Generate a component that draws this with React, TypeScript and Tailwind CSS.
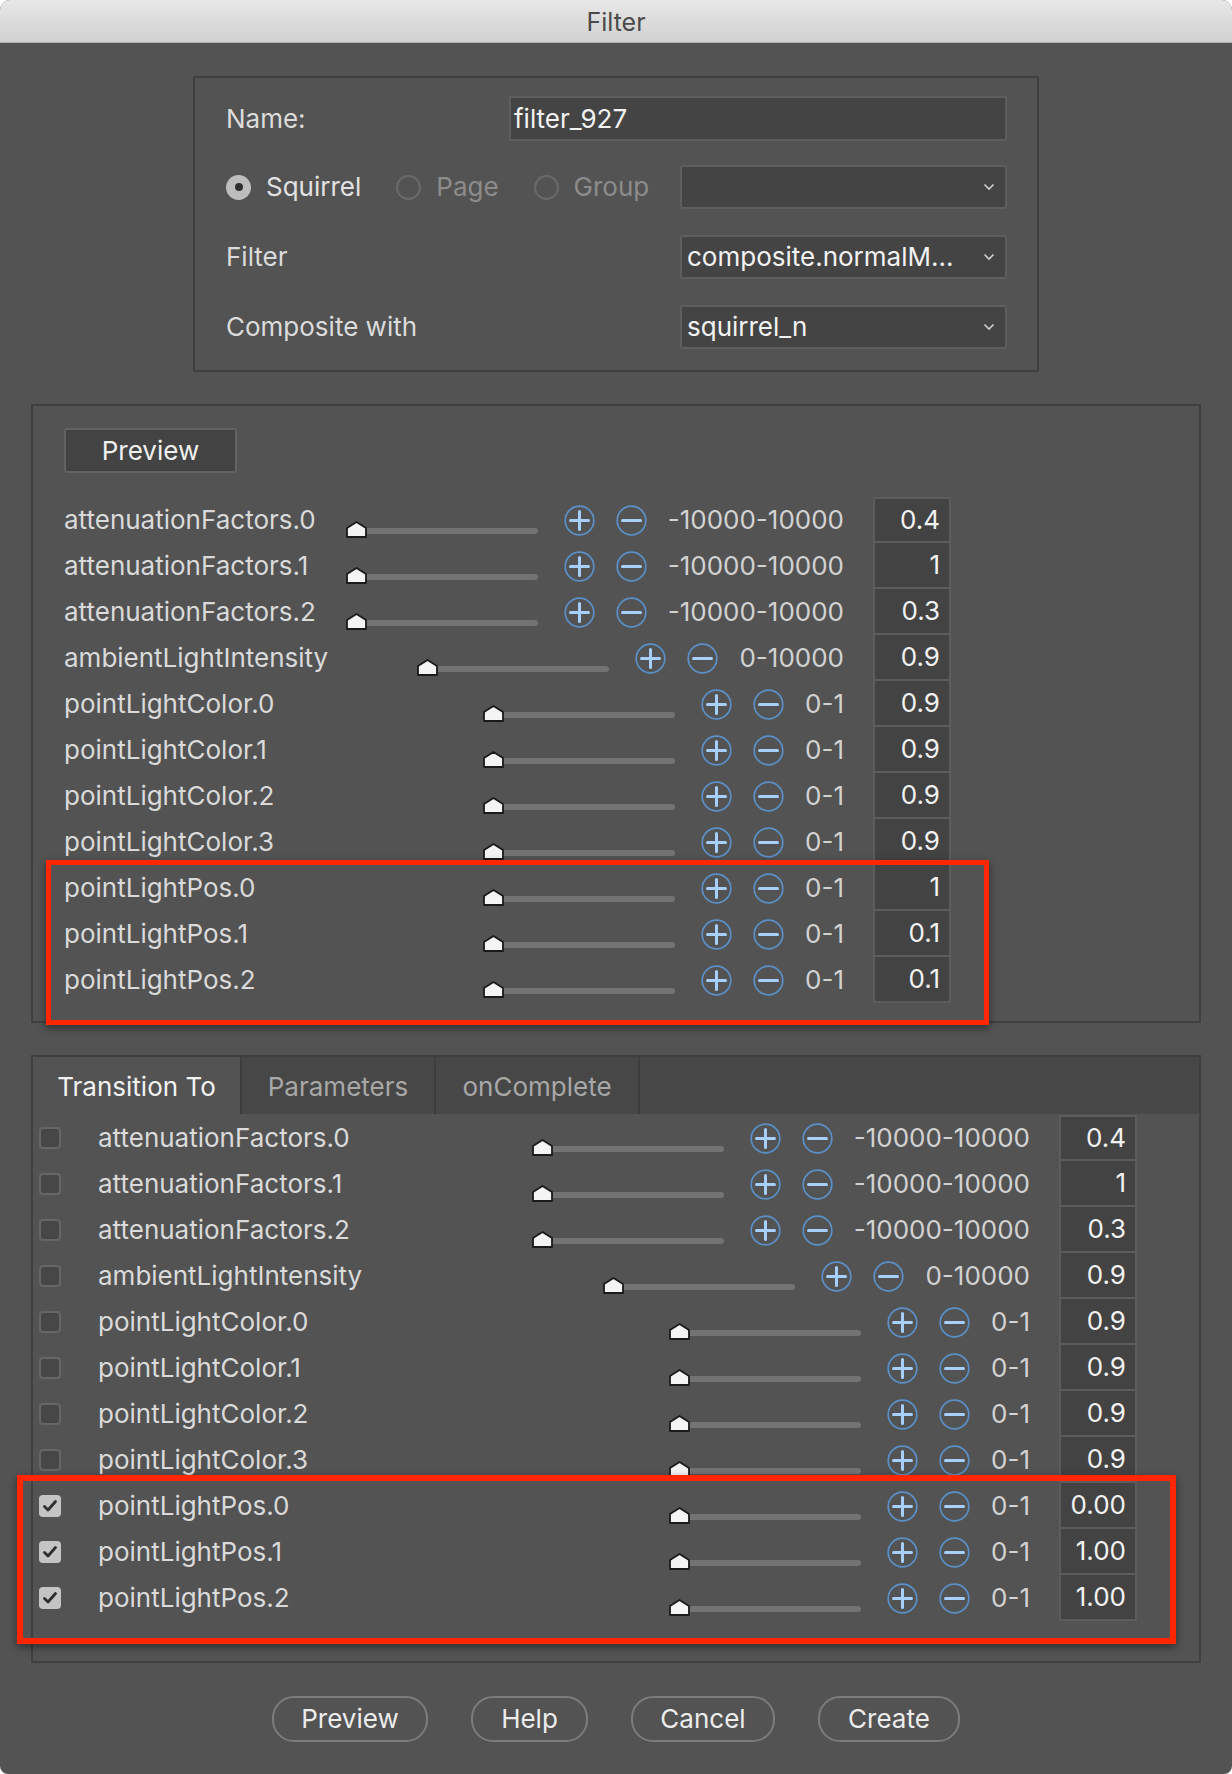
import React from "react";

type Row = { name: string; range: string; value: string; checked?: boolean };

const upperRows: Row[] = [
  { name: "attenuationFactors.0", range: "-10000-10000", value: "0.4" },
  { name: "attenuationFactors.1", range: "-10000-10000", value: "1" },
  { name: "attenuationFactors.2", range: "-10000-10000", value: "0.3" },
  { name: "ambientLightIntensity", range: "0-10000", value: "0.9" },
  { name: "pointLightColor.0", range: "0-1", value: "0.9" },
  { name: "pointLightColor.1", range: "0-1", value: "0.9" },
  { name: "pointLightColor.2", range: "0-1", value: "0.9" },
  { name: "pointLightColor.3", range: "0-1", value: "0.9" },
  { name: "pointLightPos.0", range: "0-1", value: "1" },
  { name: "pointLightPos.1", range: "0-1", value: "0.1" },
  { name: "pointLightPos.2", range: "0-1", value: "0.1" },
];

const lowerRows: Row[] = [
  ...upperRows.slice(0, 8),
  { name: "pointLightPos.0", range: "0-1", value: "0.00", checked: true },
  { name: "pointLightPos.1", range: "0-1", value: "1.00", checked: true },
  { name: "pointLightPos.2", range: "0-1", value: "1.00", checked: true },
];

function StepIcon({ minus }: { minus?: boolean }) {
  return (
    <svg width="31" height="31" viewBox="0 0 31 31" className="shrink-0">
      <circle cx="15.5" cy="15.5" r="14.3" fill="none" stroke="#5b8fc6" strokeWidth="1.7" />
      <path
        d={minus ? "M6.5 15.5H24.5" : "M6.5 15.5H24.5M15.5 6.5V24.5"}
        stroke="#a6d0fb"
        strokeWidth="3"
        strokeLinecap="round"
      />
    </svg>
  );
}

function Slider() {
  return (
    <div className="relative w-[192px] h-[17px] self-start mt-[24px] shrink-0">
      <div className="absolute left-[8px] right-0 top-[7px] h-[6px] rounded-full bg-[#737373]" />
      <svg width="21" height="17" viewBox="0 0 21 17" className="absolute left-0 top-0">
        <path
          d="M1 16V7L10.5 1L20 7V16Z"
          fill="#f4f4f4"
          stroke="#1a1a1a"
          strokeWidth="1.8"
          strokeLinejoin="round"
        />
      </svg>
    </div>
  );
}

function ValueBox({ value, first }: { value: string; first: boolean }) {
  return (
    <div
      className={
        "w-[78px] h-[46px] shrink-0 bg-[#434343] border-x-2 border-b-2 border-[#5c5c5c] flex items-center justify-end pr-[9px] text-[#f2f2f2] " +
        (first ? "border-t-2" : "")
      }
    >
      {value}
    </div>
  );
}

function ParamRow({ row, first, check }: { row: Row; first: boolean; check?: boolean }) {
  return (
    <div className="flex items-center h-[46px]">
      {check && (
        <div
          className={
            "w-[22px] h-[22px] rounded-[4px] mr-[37px] shrink-0 flex items-center justify-center " +
            (row.checked ? "bg-[#c4c4c4]" : "bg-[#474747] border-2 border-[#666666]")
          }
        >
          {row.checked && (
            <svg width="16" height="14" viewBox="0 0 16 14">
              <path d="M2.5 7.5L6 11L13.5 2.5" fill="none" stroke="#2e2e2e" strokeWidth="2.8" strokeLinecap="round" strokeLinejoin="round" />
            </svg>
          )}
        </div>
      )}
      <div className="flex-1 text-[#dadada] whitespace-nowrap">{row.name}</div>
      <Slider />
      <div className="ml-[26px] flex items-center gap-[21px]">
        <StepIcon />
        <StepIcon minus />
      </div>
      <div className="ml-[21px] mr-[29px] text-[#d2d2d2] whitespace-nowrap">{row.range}</div>
      <ValueBox value={row.value} first={first} />
    </div>
  );
}

function Radio({ label, on }: { label: string; on?: boolean }) {
  return (
    <div className="flex items-center">
      {on ? (
        <div className="w-[25px] h-[25px] rounded-full bg-[#bdbdbd] flex items-center justify-center">
          <div className="w-[8px] h-[8px] rounded-full bg-[#2f2f2f]" />
        </div>
      ) : (
        <div className="w-[25px] h-[25px] rounded-full border-2 border-[#6a6a6a]" />
      )}
      <span className={"ml-[15px] " + (on ? "text-[#e2e2e2]" : "text-[#8c8c8c]")}>{label}</span>
    </div>
  );
}

function Dropdown({ text }: { text: string }) {
  return (
    <div className="w-[327px] h-[44px] bg-[#444444] border-2 border-[#5e5e5e] rounded-[3px] flex items-center pl-[5px] pr-[10px] text-[#f2f2f2]">
      <span className="flex-1 whitespace-nowrap">{text}</span>
      <svg width="12" height="8" viewBox="0 0 12 8">
        <path d="M1.5 1.5L6 6L10.5 1.5" fill="none" stroke="#cfcfcf" strokeWidth="1.6" />
      </svg>
    </div>
  );
}

function PillButton({ label, w }: { label: string; w: string }) {
  return (
    <div className={"h-[46px] rounded-[22px] border-2 border-[#7c7c7c] flex items-center justify-center text-[#ececec] " + w}>
      {label}
    </div>
  );
}

export default function App() {
  return (
    <div
      className="relative w-[1232px] h-[1774px] bg-white text-[26px] leading-none"
      style={{ fontFamily: "Inter, 'Liberation Sans', sans-serif" }}
    >
      <div className="w-full h-full rounded-t-[10px] rounded-b-[8px] overflow-hidden bg-[#535353] flex flex-col">
        <div className="h-[43px] shrink-0 bg-gradient-to-b from-[#e8e8e8] to-[#d1d1d1] border-b border-[#b0b0b0] flex items-center justify-center pt-[3px] text-[#4b4b4b] text-[25px]">
          Filter
        </div>

        {/* top settings box */}
        <div className="w-[846px] mx-auto mt-[33px] border-2 border-[#3f3f3f] pt-[18px] pb-[21px] pl-[31px] pr-[30px] text-[#dcdcdc]">
          <div className="flex items-center justify-between h-[45px]">
            <span>Name:</span>
            <div className="w-[498px] h-[45px] bg-[#444444] border-2 border-[#5e5e5e] flex items-center pl-[3px] text-[#f2f2f2]">
              filter_927
            </div>
          </div>
          <div className="flex items-center justify-between h-[44px] mt-[24px]">
            <div className="flex items-center gap-[35px]">
              <Radio label="Squirrel" on />
              <Radio label="Page" />
              <Radio label="Group" />
            </div>
            <Dropdown text="" />
          </div>
          <div className="flex items-center justify-between h-[44px] mt-[26px]">
            <span>Filter</span>
            <Dropdown text="composite.normalM..." />
          </div>
          <div className="flex items-center justify-between h-[44px] mt-[26px]">
            <span>Composite with</span>
            <Dropdown text="squirrel_n" />
          </div>
        </div>

        {/* preview section */}
        <div className="mx-[31px] mt-[32px] border-2 border-[#3f3f3f] pl-[31px] pt-[22px] pb-[18px]">
          <div className="w-[173px] h-[45px] bg-[#434343] border-2 border-[#626262] rounded-[3px] flex items-center justify-center text-[#f0f0f0]">
            Preview
          </div>
          <div className="w-[887px] mt-[24px]">
            {upperRows.map((r, i) => (
              <ParamRow key={i} row={r} first={i === 0} />
            ))}
          </div>
        </div>

        {/* transition section */}
        <div className="mx-[31px] mt-[32px] border-2 border-[#3f3f3f] pb-[40px]">
          <div className="flex h-[57px] bg-[#474747]">
            <div className="w-[209px] flex items-center justify-center pt-[2px] bg-[#535353] text-[#f2f2f2] border-r-2 border-[#3d3d3d]">
              Transition To
            </div>
            <div className="w-[194px] flex items-center justify-center pt-[2px] text-[#a8a8a8] border-r-2 border-[#3d3d3d]">
              Parameters
            </div>
            <div className="w-[204px] flex items-center justify-center pt-[2px] text-[#a8a8a8] border-r-2 border-[#3d3d3d]">
              onComplete
            </div>
          </div>
          <div className="w-[1098px] ml-[6px] mt-[1px]">
            {lowerRows.map((r, i) => (
              <ParamRow key={i} row={r} first={i === 0} check />
            ))}
          </div>
        </div>

        <div className="flex justify-center gap-[43px] mt-[33px]">
          <PillButton label="Preview" w="w-[156px]" />
          <PillButton label="Help" w="w-[117px]" />
          <PillButton label="Cancel" w="w-[144px]" />
          <PillButton label="Create" w="w-[142px]" />
        </div>
      </div>

      {/* red annotation frames */}
      <div className="absolute left-[46px] top-[860px] w-[943px] h-[165px] border-[5px] border-[#ff2600] shadow-[0_3px_8px_rgba(0,0,0,0.45)]" />
      <div className="absolute left-[17px] top-[1475px] w-[1159px] h-[169px] border-[6px] border-[#ff2600] shadow-[0_3px_8px_rgba(0,0,0,0.45)]" />
    </div>
  );
}
